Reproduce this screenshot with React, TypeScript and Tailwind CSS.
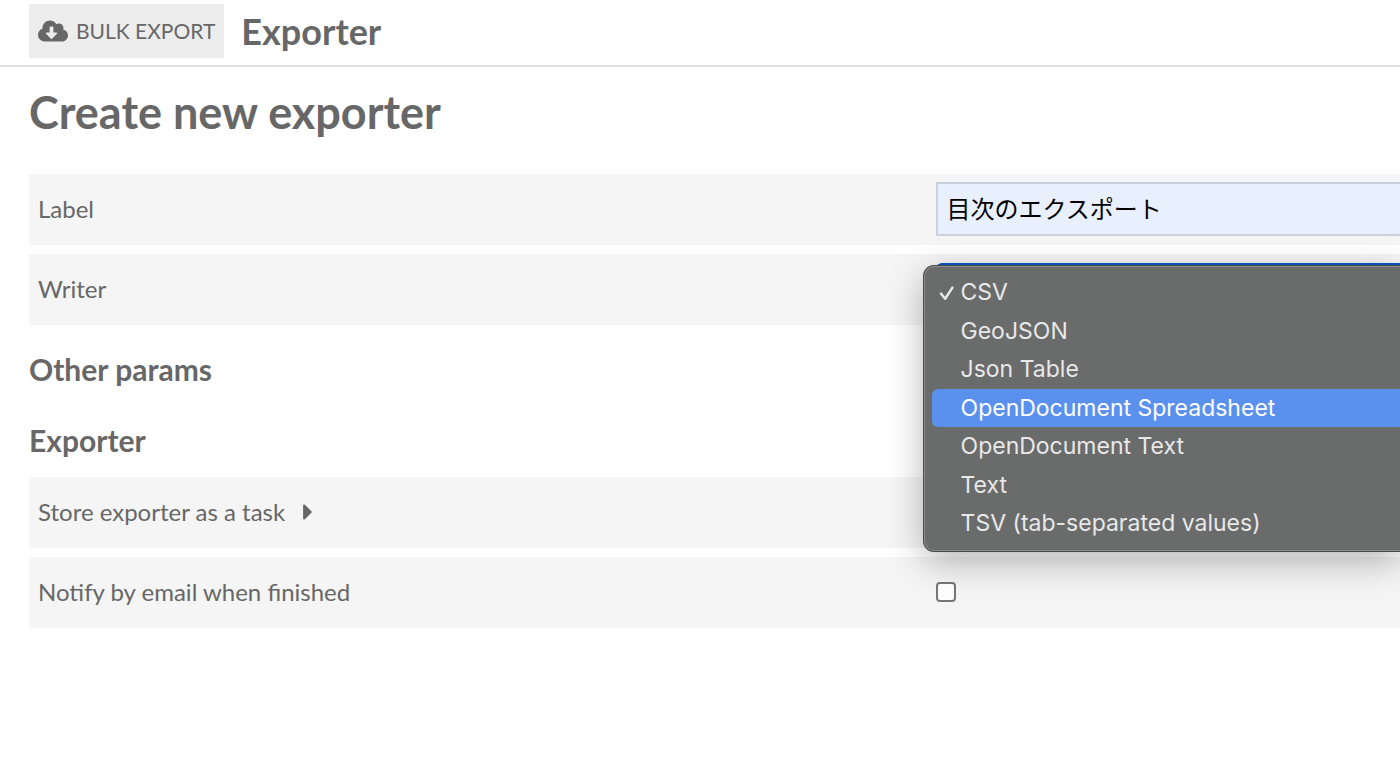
import { useState, type ReactNode } from "react";
import clsx from "clsx";
import { FaCaretRight, FaCloudDownloadAlt } from "react-icons/fa";

const WRITERS = [
  { value: "csv", label: "CSV" },
  { value: "geojson", label: "GeoJSON" },
  { value: "json-table", label: "Json Table" },
  { value: "ods", label: "OpenDocument Spreadsheet" },
  { value: "odt", label: "OpenDocument Text" },
  { value: "txt", label: "Text" },
  { value: "tsv", label: "TSV (tab-separated values)" },
];

interface FieldProps {
  id?: string;
  label: ReactNode;
  children?: ReactNode;
}

function Field({ id, label, children }: FieldProps) {
  return (
    <div className="grid h-[71px] grid-cols-[659fr_341fr] items-center bg-[#f5f5f5] pb-px pl-[9px]">
      {id ? (
        <label htmlFor={id} className="pb-px">
          {label}
        </label>
      ) : (
        <div className="pb-px">{label}</div>
      )}
      <div className="relative flex items-center">{children}</div>
    </div>
  );
}

function CheckMark() {
  return (
    <svg viewBox="0 0 16 18" className="h-[18px] w-4" fill="none" stroke="currentColor" aria-hidden="true">
      <path d="M2 10.6 6.2 15.8 13.4 4.6" strokeWidth="2.5" strokeLinecap="round" strokeLinejoin="round" />
    </svg>
  );
}

interface WriterMenuProps {
  selected: string;
  onSelect: (value: string) => void;
}

function WriterMenu({ selected, onSelect }: WriterMenuProps) {
  const [active, setActive] = useState("ods");

  return (
    <div
      role="listbox"
      aria-label="Writer"
      className="absolute top-[3px] right-0 -left-3 z-10 grid h-[285px] auto-rows-fr rounded-l-[10px] border border-r-0 border-[#8c8c8c] bg-[#6a6b6b] pt-[6px] pb-[7px] pl-[7px] font-[Inter,sans-serif] text-[23px] text-[#e8e8e8] shadow-[0_0_0_1px_#4a4a4a,0_10px_36px_rgba(0,0,0,0.3)]"
    >
      {WRITERS.map((writer) => (
        <button
          key={writer.value}
          type="button"
          role="option"
          aria-selected={writer.value === selected}
          className={clsx(
            "flex items-center gap-[6px] rounded-l-[6px] pl-[7px] text-left whitespace-nowrap",
            writer.value === active && "bg-[#5b91ee] text-white",
          )}
          onMouseEnter={() => setActive(writer.value)}
          onClick={() => onSelect(writer.value)}
        >
          <span className="w-4">{writer.value === selected && <CheckMark />}</span>
          {writer.label}
        </button>
      ))}
    </div>
  );
}

export default function App() {
  const [label, setLabel] = useState("目次のエクスポート");
  const [writer, setWriter] = useState("csv");
  const [notify, setNotify] = useState(false);

  return (
    <div className="min-h-screen overflow-x-hidden bg-white font-[Lato,sans-serif] text-2xl text-[#676767]">
      <header className="flex h-[67px] items-start gap-[17px] border-b-2 border-[#dfdfdf] pt-1 pl-[29px]">
        <button type="button" className="flex h-[54px] items-center gap-2 bg-[#ededed] px-[9px] text-[21px]">
          <FaCloudDownloadAlt size={30} />
          BULK EXPORT
        </button>
        <h2 className="text-[36px] leading-[54px] font-bold">Exporter</h2>
      </header>

      {/* Exporter form */}
      <main className="pl-[29px]">
        <h1 className="pt-[15px] pb-8 text-[45px] leading-[60px] font-bold">Create new exporter</h1>

        <form>
          <div className="flex flex-col gap-[9px]">
            <Field id="label" label="Label">
              <input
                id="label"
                type="text"
                value={label}
                onChange={(e) => setLabel(e.target.value)}
                className="h-[54px] w-full border-2 border-r-0 border-[#c9d0e0] bg-[#e8effd] px-[9px] pb-[3px] font-[Inter,'Noto_Sans_CJK_JP',sans-serif] text-black outline-none"
              />
            </Field>
            <Field id="writer" label="Writer">
              <select
                id="writer"
                value={writer}
                onChange={(e) => setWriter(e.target.value)}
                className="h-[52px] w-full appearance-none rounded-l-[6px] border-2 border-r-0 border-[#0a56c4] bg-white px-[9px] outline-none"
              >
                {WRITERS.map((item) => (
                  <option key={item.value} value={item.value}>
                    {item.label}
                  </option>
                ))}
              </select>
              <WriterMenu selected={writer} onSelect={setWriter} />
            </Field>
          </div>

          <h3 className="pt-6 text-[30px] leading-[40px] font-bold">Other params</h3>
          <h3 className="pt-[31px] pb-[17px] text-[30px] leading-[40px] font-bold">Exporter</h3>

          <div className="flex flex-col gap-[9px]">
            <Field
              label={
                <button type="button" className="flex items-center gap-[10px]">
                  Store exporter as a task
                  <FaCaretRight size={26} />
                </button>
              }
            />
            <Field id="notify" label="Notify by email when finished">
              <input
                id="notify"
                type="checkbox"
                checked={notify}
                onChange={(e) => setNotify(e.target.checked)}
                className="size-5 appearance-none rounded-[4px] border-2 border-[#767676] bg-white checked:bg-[#0a56c4]"
              />
            </Field>
          </div>
        </form>
      </main>
    </div>
  );
}
